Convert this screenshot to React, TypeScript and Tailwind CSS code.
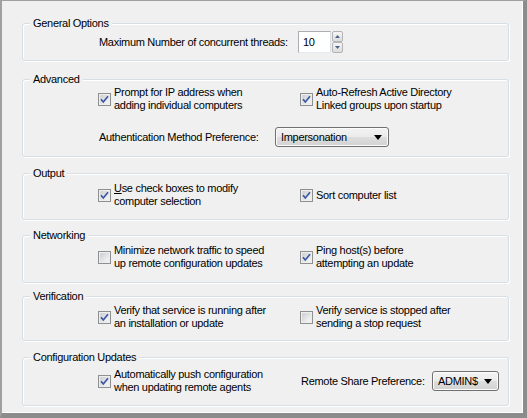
import type { ReactNode } from 'react'

const FONT = { fontFamily: '"Liberation Sans", Arial, sans-serif' }

function CheckBox({ checked }: { checked: boolean }) {
  return (
    <svg width="13" height="13" viewBox="0 0 13 13" className="shrink-0">
      <defs>
        <linearGradient id="cbg" x1="0" y1="0" x2="1" y2="1">
          <stop offset="0" stopColor="#c9ccd1" />
          <stop offset="1" stopColor="#fbfbfb" />
        </linearGradient>
      </defs>
      <rect x="0.5" y="0.5" width="12" height="12" fill="#f4f4f4" stroke="#8e8f8f" />
      <rect x="2" y="2" width="9" height="9" fill="url(#cbg)" stroke="#e0e1e3" strokeWidth="0.6" />
      {checked && (
        <path d="M3 6.2 L5.3 9 L10 3.3" fill="none" stroke="#3b58a0" strokeWidth="1.7" strokeLinejoin="miter" />
      )}
    </svg>
  )
}

function Check({ checked, children, width }: { checked: boolean; children: ReactNode; width?: string }) {
  return (
    <div className={`flex items-center gap-[3px] ${width ?? ''}`}>
      <CheckBox checked={checked} />
      <div className="leading-[13px]">{children}</div>
    </div>
  )
}

function Combo({ value, width }: { value: string; width: string }) {
  return (
    <div
      className={`${width} h-[20px] flex items-center justify-between pl-[5px] pr-[6px] rounded-[3px] border border-[#707070] bg-[linear-gradient(#f3f3f3_0%,#ebebeb_50%,#dedede_50%,#d2d2d2_100%)] shadow-[inset_0_0_0_1px_#fcfcfc]`}
    >
      <span className="leading-[13px]">{value}</span>
      <svg width="8" height="5" viewBox="0 0 8 5">
        <path d="M0 0 H8 L4 5 Z" fill="#000" />
      </svg>
    </div>
  )
}

function Group({ title, className, children }: { title: string; className: string; children: ReactNode }) {
  return (
    <div
      className={`ml-[20px] w-[487px] rounded-[3px] border border-[#d5dfe5] shadow-[inset_1px_1px_0_#fff,1px_1px_0_#fff] ${className}`}
    >
      <div className="-mt-[7px] ml-[7px] px-[3px] w-fit h-[13px] leading-[13px] bg-[#f0f0f0]">{title}</div>
      {children}
    </div>
  )
}

function SpinArrow({ up }: { up: boolean }) {
  return (
    <div className="h-[11px] w-[11px] flex items-center justify-center border border-[#b4b4b4] rounded-[2px] bg-[linear-gradient(#f6f6f6,#dcdcdc)]">
      <svg width="5" height="3" viewBox="0 0 5 3">
        <path d={up ? 'M0 3 H5 L2.5 0 Z' : 'M0 0 H5 L2.5 3 Z'} fill="#4d6185" />
      </svg>
    </div>
  )
}

export default function App() {
  return (
    <div
      style={FONT}
      className="w-[527px] h-[418px] overflow-hidden text-[11px] tracking-[-0.3px] text-black border-l-2 border-t border-[#a0a0a0] border-r-4 border-b-[5px] border-r-[#8c8c8c] border-b-[#8c8c8c]"
    >
      <div className="h-full bg-[#f0f0f0] border-r border-b border-white pt-[22px]">
        <Group title="General Options" className="h-[38px]">
          <div className="flex items-center mt-[1px] pl-[76px]">
            <span className="w-[199px] leading-[13px]">Maximum Number of concurrent threads:</span>
            <div className="w-[33px] h-[22px] flex items-center pl-[4px] bg-white border border-[#abadb3] border-b-[#e3e9ef] border-r-[#dbdfe6]">
              10
            </div>
            <div className="ml-[1px] flex flex-col gap-[0px]">
              <SpinArrow up />
              <SpinArrow up={false} />
            </div>
          </div>
        </Group>

        <Group title="Advanced" className="h-[78px] mt-[18px]">
          <div className="flex pl-[75px]">
            <Check checked width="w-[202px]">
              Prompt for IP address when
              <br />
              adding individual computers
            </Check>
            <Check checked>
              Auto-Refresh Active Directory
              <br />
              Linked groups upon startup
            </Check>
          </div>
          <div className="flex items-center mt-[15px] pl-[76px]">
            <span className="w-[176px] leading-[13px]">Authentication Method Preference:</span>
            <Combo value="Impersonation" width="w-[114px]" />
          </div>
        </Group>

        <Group title="Output" className="h-[47px] mt-[16px]">
          <div className="flex items-center mt-[2px] pl-[75px]">
            <Check checked width="w-[202px]">
              <u>U</u>se check boxes to modify
              <br />
              computer selection
            </Check>
            <Check checked>Sort computer list</Check>
          </div>
        </Group>

        <Group title="Networking" className="h-[48px] mt-[15px]">
          <div className="flex items-center mt-[2px] pl-[75px]">
            <Check checked={false} width="w-[202px]">
              Minimize network traffic to speed
              <br />
              up remote configuration updates
            </Check>
            <Check checked>
              Ping host(s) before
              <br />
              attempting an update
            </Check>
          </div>
        </Group>

        <Group title="Verification" className="h-[45px] mt-[13px]">
          <div className="flex items-center mt-[1px] pl-[75px]">
            <Check checked width="w-[202px]">
              Verify that service is running after
              <br />
              an installation or update
            </Check>
            <Check checked={false}>
              Verify service is stopped after
              <br />
              sending a stop request
            </Check>
          </div>
        </Group>

        <Group title="Configuration Updates" className="h-[49px] mt-[16px]">
          <div className="flex items-center mt-[4px] pl-[75px]">
            <Check checked width="w-[202px]">
              Automatically push configuration
              <br />
              when updating remote agents
            </Check>
            <div className="flex items-center pl-[1px]">
              <span className="w-[131px] leading-[13px]">Remote Share Preference:</span>
              <Combo value="ADMIN$" width="w-[67px]" />
            </div>
          </div>
        </Group>
      </div>
    </div>
  )
}
